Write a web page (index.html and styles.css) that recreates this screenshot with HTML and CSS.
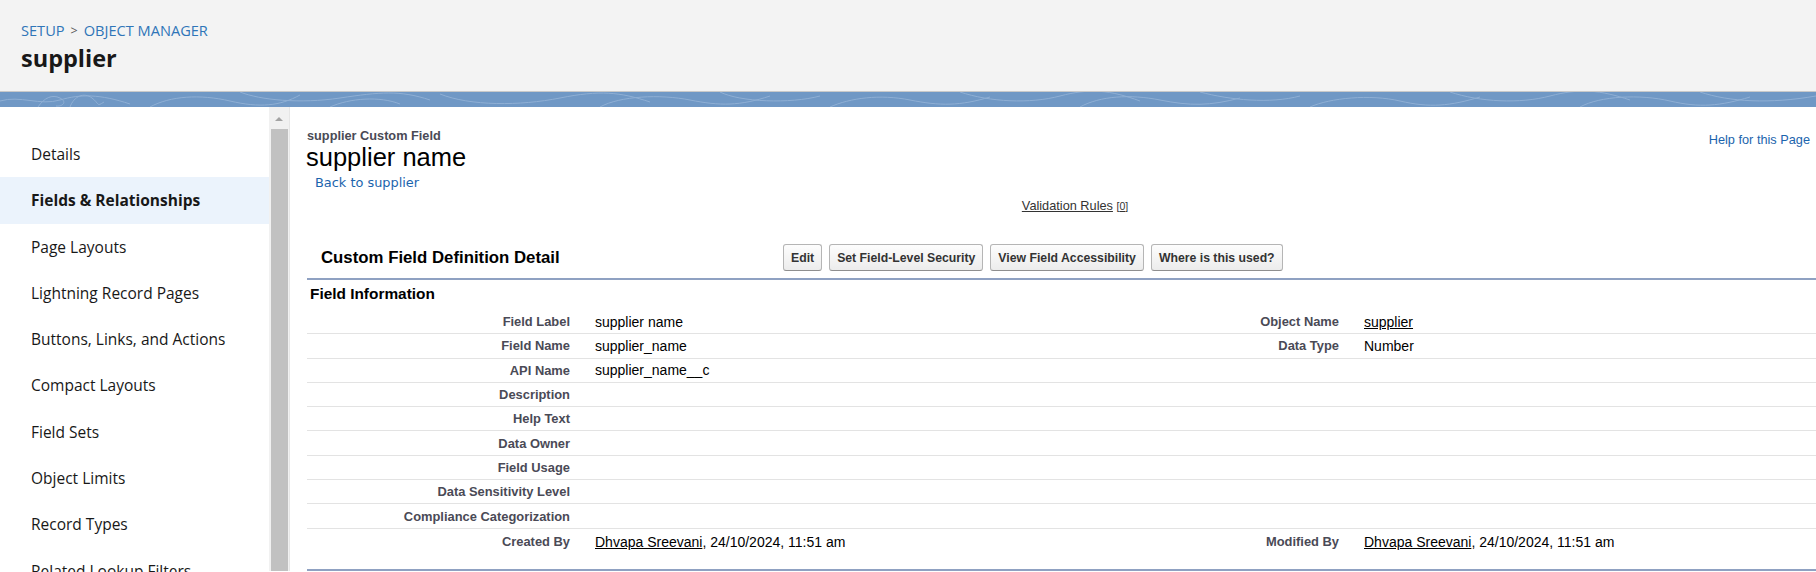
FILE: index.html
```html
<!DOCTYPE html>
<html lang="en">
<head>
<meta charset="utf-8">
<title>supplier name | Object Manager</title>
<link rel="stylesheet" href="styles.css">
</head>
<body>
<header class="setup-header">
  <nav class="crumbs"><a class="crumb">Setup</a><span class="crumb-sep">&gt;</span><a class="crumb">Object Manager</a></nav>
  <h1 class="obj-title">supplier</h1>
</header>
<div class="banner">
  <svg class="banner-art" width="1816" height="15" viewBox="0 0 1816 15" preserveAspectRatio="none">
    <g fill="none" stroke="#a9c3e2" stroke-width="1" opacity="0.55">
      <path d="M0 9 C 20 3, 40 14, 60 8 S 100 2, 130 12"/>
      <path d="M38 15 C 44 6, 52 2, 60 6 C 68 10, 62 15, 56 14"/>
      <path d="M70 15 C 74 4, 84 0, 92 6 S 96 15, 104 10"/>
      <path d="M150 15 C 170 4, 200 2, 230 9 S 280 14, 300 3"/>
      <path d="M240 0 C 260 8, 300 12, 340 6 S 400 -2, 430 8"/>
      <path d="M330 15 C 350 6, 380 4, 400 12"/>
      <path d="M440 2 C 470 14, 520 14, 560 6 S 620 0, 650 10"/>
      <path d="M600 15 C 620 4, 660 2, 690 8 S 740 14, 770 4"/>
      <path d="M720 0 C 740 10, 790 12, 820 4"/>
      <path d="M830 15 C 850 6, 880 2, 910 8 S 960 14, 990 5"/>
      <path d="M960 0 C 990 10, 1030 12, 1060 4 S 1110 -2, 1140 9"/>
      <path d="M1080 15 C 1100 4, 1130 2, 1160 8 S 1210 14, 1240 6"/>
      <path d="M1200 0 C 1230 8, 1270 12, 1300 4"/>
      <path d="M1310 15 C 1330 6, 1370 2, 1400 9 S 1450 14, 1480 5"/>
      <path d="M1450 0 C 1480 10, 1520 12, 1550 4 S 1600 -2, 1630 8"/>
      <path d="M1580 15 C 1600 4, 1640 2, 1670 9 S 1720 14, 1750 5"/>
      <path d="M1700 0 C 1730 10, 1770 12, 1816 4"/>
    </g>
  </svg>
</div>
<div class="workspace">
  <aside class="sidebar">
    <ul class="nav">
      <li class="nav-item">Details</li>
      <li class="nav-item is-active">Fields &amp; Relationships</li>
      <li class="nav-item">Page Layouts</li>
      <li class="nav-item">Lightning Record Pages</li>
      <li class="nav-item">Buttons, Links, and Actions</li>
      <li class="nav-item">Compact Layouts</li>
      <li class="nav-item">Field Sets</li>
      <li class="nav-item">Object Limits</li>
      <li class="nav-item">Record Types</li>
      <li class="nav-item">Related Lookup Filters</li>
    </ul>
  </aside>
  <div class="scrollbar">
    <span class="scroll-arrow"></span>
    <span class="scroll-thumb"></span>
  </div>
  <main class="main">
    <div class="pt-header">
      <div class="pt-body">
        <div class="pt-type">supplier Custom Field</div>
        <h2 class="pt-title">supplier name</h2>
        <a class="pt-back">Back to supplier</a>
      </div>
      <a class="help-link">Help for this Page</a>
    </div>
    <div class="block">
      <div class="rolodex"><a class="rolodex-link">Validation Rules</a> <span class="rolodex-count">[<a class="rolodex-link">0</a>]</span></div>
      <div class="pb-header">
        <h3 class="pb-title">Custom Field Definition Detail</h3>
        <div class="pb-buttons">
          <button class="btn">Edit</button>
          <button class="btn">Set Field-Level Security</button>
          <button class="btn">View Field Accessibility</button>
          <button class="btn">Where is this used?</button>
        </div>
      </div>
      <h4 class="sub-header">Field Information</h4>
      <div class="detail">
        <div class="row"><span class="label">Field Label</span><span class="value">supplier name</span><span class="label">Object Name</span><span class="value"><a class="ul-link">supplier</a></span></div>
        <div class="row"><span class="label">Field Name</span><span class="value">supplier_name</span><span class="label">Data Type</span><span class="value">Number</span></div>
        <div class="row"><span class="label">API Name</span><span class="value">supplier_name__c</span><span class="label"></span><span class="value"></span></div>
        <div class="row"><span class="label">Description</span><span class="value"></span><span class="label"></span><span class="value"></span></div>
        <div class="row"><span class="label">Help Text</span><span class="value"></span><span class="label"></span><span class="value"></span></div>
        <div class="row"><span class="label">Data Owner</span><span class="value"></span><span class="label"></span><span class="value"></span></div>
        <div class="row"><span class="label">Field Usage</span><span class="value"></span><span class="label"></span><span class="value"></span></div>
        <div class="row"><span class="label">Data Sensitivity Level</span><span class="value"></span><span class="label"></span><span class="value"></span></div>
        <div class="row"><span class="label">Compliance Categorization</span><span class="value"></span><span class="label"></span><span class="value"></span></div>
        <div class="row row-last"><span class="label">Created By</span><span class="value"><a class="ul-link">Dhvapa Sreevani</a>, 24/10/2024, 11:51 am</span><span class="label">Modified By</span><span class="value"><a class="ul-link">Dhvapa Sreevani</a>, 24/10/2024, 11:51 am</span></div>
      </div>
    </div>
  </main>
</div>
</body>
</html>
```

FILE: styles.css
```css
* { box-sizing: border-box; }

html, body {
  margin: 0;
  padding: 0;
}

body {
  width: 1816px;
  height: 572px;
  overflow: hidden;
  background: #ffffff;
  font-family: "Liberation Sans", Arial, sans-serif;
  color: #000;
}

/* ---------- Lightning header ---------- */
.setup-header {
  height: 92px;
  background: #f3f3f3;
  border-bottom: 1px solid #c9c9c9;
  padding: 20px 0 0 21px;
  font-family: "Open Sans", "Noto Sans", sans-serif;
}

.crumbs {
  display: flex;
  align-items: center;
  height: 20px;
  font-size: 14.6px;
  text-transform: uppercase;
  color: #2f75b8;
}

.crumb { color: #2f75b8; }

.crumb-sep {
  margin: 0 6px;
  font-size: 12.5px;
  color: #5a5a5a;
}

.obj-title {
  margin: 4px 0 0;
  font-size: 23.5px;
  line-height: 28px;
  font-weight: 700;
  color: #181818;
}

.banner {
  height: 15px;
  background: #7098c5;
  overflow: hidden;
}

.banner-art { display: block; }

/* ---------- workspace ---------- */
.workspace {
  display: flex;
  height: 464px;
}

.sidebar {
  width: 269px;
  flex-shrink: 0;
  padding-top: 24px;
  background: #fff;
  font-family: "Open Sans", "Noto Sans", sans-serif;
}

.nav {
  list-style: none;
  margin: 0;
  padding: 0;
}

.nav-item {
  height: 46.3px;
  line-height: 46.3px;
  padding-left: 31px;
  font-size: 15.5px;
  color: #181818;
  white-space: nowrap;
}

.nav-item.is-active {
  background: #ebf3fc;
  font-weight: 700;
}

.scrollbar {
  width: 21px;
  flex-shrink: 0;
  background: #f1f1f1;
  border-right: 1px solid #e6e6e6;
  display: flex;
  flex-direction: column;
  align-items: center;
  padding-top: 10px;
}

.scroll-arrow {
  width: 0;
  height: 0;
  border-left: 4px solid transparent;
  border-right: 4px solid transparent;
  border-bottom: 4px solid #a3a3a3;
}

.scroll-thumb {
  width: 17px;
  flex: 1;
  margin-top: 8px;
  background: #c1c1c1;
}

/* ---------- classic main ---------- */
.main {
  flex: 1;
  min-width: 0;
  overflow: hidden;
  padding: 21px 0 0 16px;
  font-size: 14px;
}

.pt-header {
  display: flex;
  justify-content: space-between;
  align-items: flex-start;
  padding-right: 6px;
}

.pt-type {
  margin-left: 1px;
  font-size: 12.74px;
  line-height: 15px;
  font-weight: 700;
  color: #4a4a56;
}

.pt-title {
  margin: 0;
  font-size: 25.5px;
  line-height: 28px;
  font-weight: 400;
  color: #000;
}

.pt-back {
  display: inline-block;
  margin: 4px 0 0 9px;
  font-family: "DejaVu Sans", Verdana, sans-serif;
  font-size: 12.9px;
  line-height: 16px;
  color: #1b64ad;
}

.help-link {
  margin-top: 4px;
  font-size: 12.74px;
  line-height: 15px;
  color: #1b64ad;
}

.block {
  width: 1536px;
  margin-left: 1px;
  border-bottom: 2px solid #8fa1c2;
}

.rolodex {
  margin-top: 7px;
  height: 16px;
  line-height: 16px;
  text-align: center;
  font-size: 12.74px;
  color: #333;
}

.rolodex-link {
  color: #333;
  text-decoration: underline;
}

.rolodex-count { font-size: 10.5px; }

.pb-header {
  display: flex;
  align-items: center;
  margin-top: 24px;
  padding: 6px 0 7px;
  border-bottom: 2px solid #8fa1c2;
}

.pb-title {
  width: 476px;
  flex-shrink: 0;
  margin: 0;
  padding-left: 14px;
  font-size: 16.8px;
  font-weight: 700;
  color: #000;
}

.pb-buttons {
  display: flex;
  gap: 7px;
}

.btn {
  height: 27px;
  padding: 0 7px;
  font-family: "Liberation Sans", Arial, sans-serif;
  font-size: 12.25px;
  font-weight: 700;
  color: #333;
  border: 1px solid #b5b5b5;
  border-bottom-color: #8f8f8f;
  border-radius: 3px;
  background: linear-gradient(#fdfdfd, #ececec);
}

.sub-header {
  margin: 2px 0 4px;
  padding-left: 3px;
  font-size: 15.4px;
  line-height: 24px;
  font-weight: 700;
  color: #000;
}

.detail { padding-bottom: 14px; }

.row {
  display: grid;
  grid-template-columns: 273px 496px 273px 1fr;
  align-items: center;
  height: 24.3px;
  border-bottom: 1px solid #e3e3e3;
}

.row-last {
  height: 26px;
  border-bottom: none;
}

.label {
  padding-right: 10px;
  text-align: right;
  font-size: 12.9px;
  font-weight: 700;
  color: #4a4a56;
  white-space: nowrap;
}

.value {
  padding-left: 15px;
  font-size: 14px;
  color: #000;
  white-space: nowrap;
}

.ul-link {
  color: #000;
  text-decoration: underline;
}
```
